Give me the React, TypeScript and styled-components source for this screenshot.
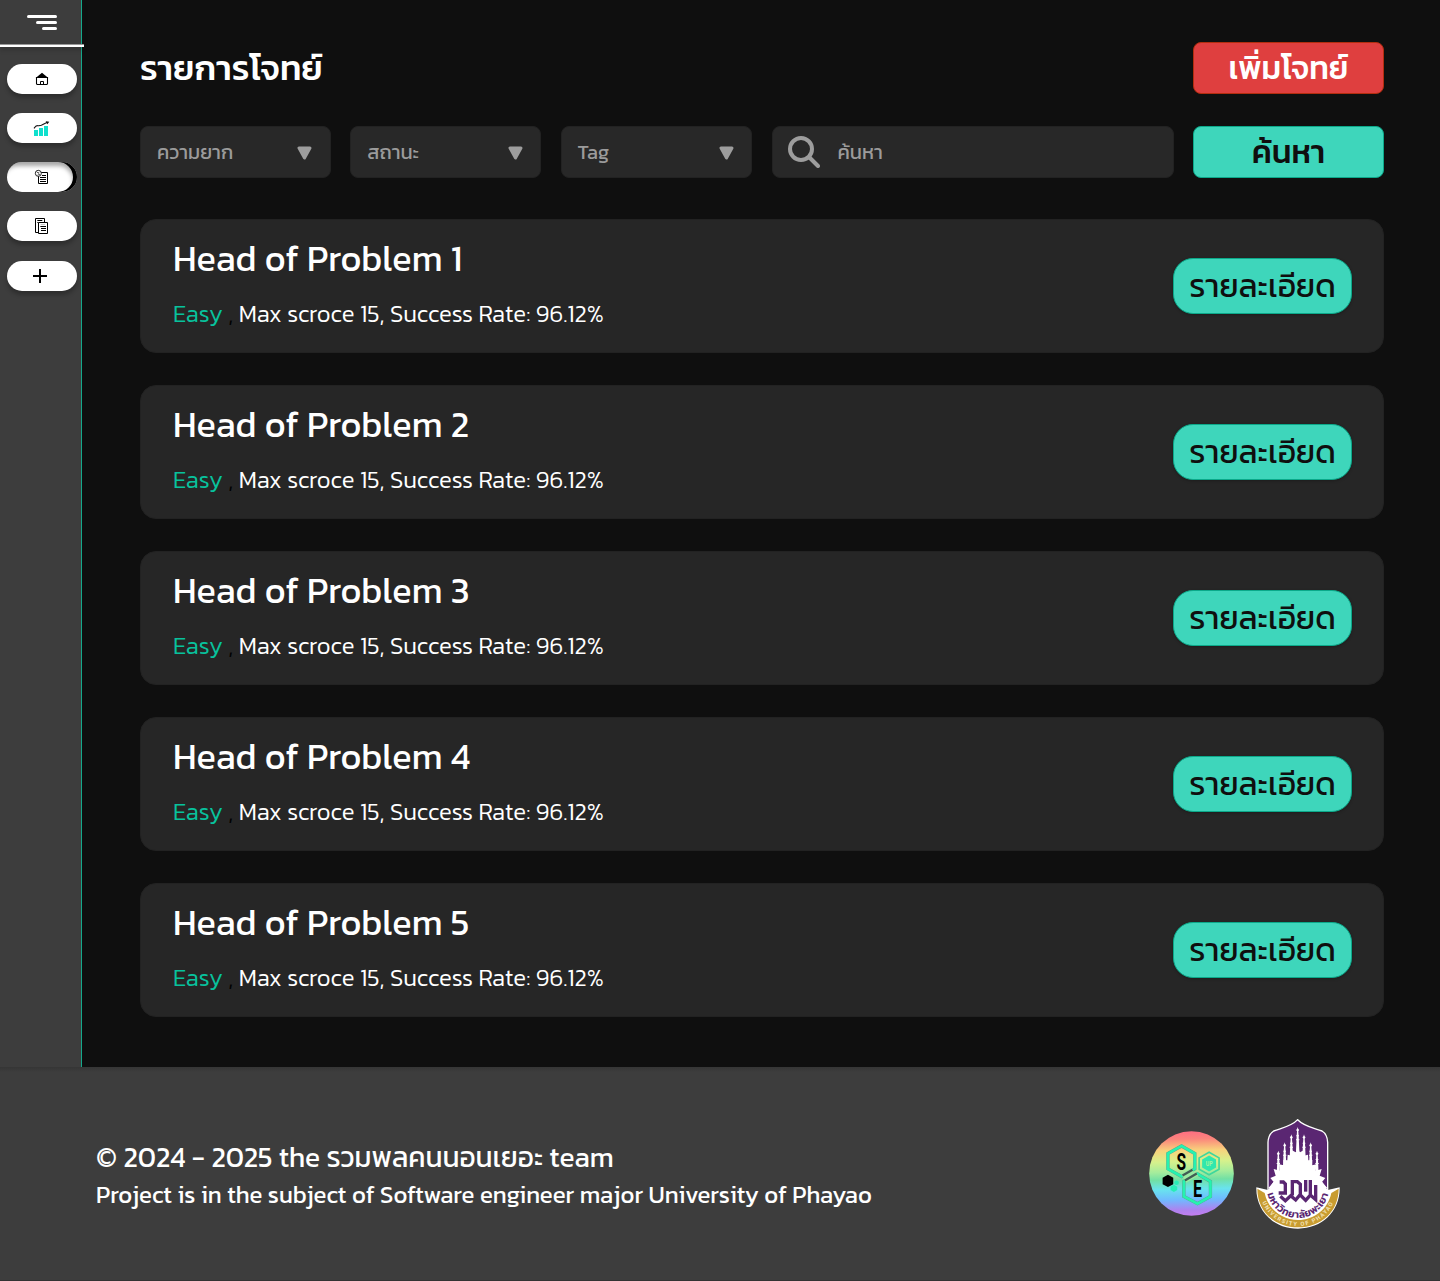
import React from "react";
import styled, { createGlobalStyle } from "styled-components";

const GlobalStyle = createGlobalStyle`
  *, *::before, *::after { box-sizing: border-box; }
  body {
    margin: 0;
    background: #0f0f0f;
    color: #fff;
    font-family: Kanit, "Noto Sans", "Noto Sans Thai", "Open Sans", sans-serif;
  }
  button, input { font: inherit; }
`;

const Page = styled.div`
  display: flex;
  flex-direction: column;
  width: 1440px;
  height: 1281px;
  overflow: hidden;
`;

const Body = styled.div`
  display: flex;
  height: 1067px;
`;

const Sidebar = styled.aside`
  flex: none;
  width: 82px;
  background: #3d3d3d;
  border-right: 1px solid #14a88b;
`;

const MenuBar = styled.div`
  display: flex;
  flex-direction: column;
  align-items: flex-end;
  gap: 3px;
  width: 84px;
  height: 47px;
  padding: 15px 27px 0 0;
  border-bottom: 2px solid #fff;
  box-shadow: 0 4px 4px rgba(0, 0, 0, 0.12), inset 0 -1px 0 #999;
`;

const MenuLine = styled.span<{ $width: number }>`
  width: ${(p) => p.$width}px;
  height: 3px;
  border-radius: 1.5px;
  background: #fff;
`;

const Nav = styled.nav`
  display: flex;
  flex-direction: column;
  gap: 19px;
  padding: 17px 0 0 7px;
`;

const NavPill = styled.button<{ $active?: boolean }>`
  display: block;
  width: 70px;
  height: 30px;
  padding: 0;
  border: 0;
  border-radius: 15px;
  background: #fff;
  box-shadow: ${(p) =>
    p.$active
      ? "inset -4px 0 0 #000, inset -4px 4px 4px rgba(0, 0, 0, 0.35)"
      : "0 4px 4px rgba(0, 0, 0, 0.25)"};

  &:last-child { margin-top: 1px; }

  svg { display: block; width: 70px; height: 30px; }
`;

const Main = styled.main`
  flex: 1;
  padding: 42px 56px 0 58px;
`;

const TitleRow = styled.header`
  display: flex;
  align-items: center;
  justify-content: space-between;
  height: 52px;
`;

const Title = styled.h1`
  margin: 0;
  font-size: 35px;
  font-weight: 500;
  line-height: 52px;
  white-space: nowrap;
`;

const ActionButton = styled.button<{ $tone: "danger" | "primary" }>`
  display: flex;
  align-items: center;
  justify-content: center;
  width: 191px;
  height: 52px;
  padding: 0;
  border: 1px solid ${(p) => (p.$tone === "danger" ? "#b32d0e" : "#0ba98a")};
  border-radius: 8px;
  background: ${(p) => (p.$tone === "danger" ? "#df3f3f" : "#3ed6bb")};
  color: ${(p) => (p.$tone === "danger" ? "#fff" : "#0f0f0f")};
  font-size: 32px;
  font-weight: 500;
  line-height: 50px;
  white-space: nowrap;
`;

const Filters = styled.div`
  display: grid;
  grid-template-columns: 190.8px 190.9px 191.6px 402px 191px;
  justify-content: space-between;
  margin-top: 32px;
`;

const Field = styled.div`
  display: flex;
  align-items: center;
  height: 52px;
  padding: 0 17.5px 0 16px;
  border: 1px solid #222;
  border-radius: 8px;
  background: #282828;
  color: #9b9b9b;
  font-size: 20px;
  white-space: nowrap;
`;

const Select = styled(Field)`
  justify-content: space-between;

  svg { margin-top: 2px; }
`;

const SearchField = styled(Field)`
  gap: 18px;
  padding-left: 15px;
`;

const List = styled.section`
  display: flex;
  flex-direction: column;
  gap: 32px;
  margin-top: 41px;
`;

const Card = styled.article`
  display: flex;
  align-items: center;
  justify-content: space-between;
  height: 134px;
  padding: 0 31px 0 32px;
  border: 1px solid #222;
  border-radius: 16px;
  background: #262626;
`;

const CardText = styled.div`
  height: 132px;
  padding-top: 11px;
`;

const CardTitle = styled.h2`
  margin: 0;
  font-size: 36px;
  font-weight: 400;
  line-height: 54px;
  white-space: nowrap;
`;

const CardMeta = styled.p`
  margin: 11px 0 0;
  font-size: 24px;
  font-weight: 300;
  line-height: 36px;
  white-space: nowrap;
`;

const Level = styled.span`
  color: #08c29d;
`;

const Comma = styled.span`
  color: #000;
`;

const DetailButton = styled.button`
  display: flex;
  align-items: center;
  justify-content: center;
  width: 179px;
  height: 56px;
  padding: 0;
  border: 1px solid #0ba98a;
  border-radius: 20px;
  background: #3ed6bb;
  box-shadow: 0 1px 3px rgba(0, 0, 0, 0.25);
  color: #0f0f0f;
  font-size: 32px;
  font-weight: 400;
  line-height: 54px;
  white-space: nowrap;
`;

const Footer = styled.footer`
  display: flex;
  align-items: flex-start;
  justify-content: space-between;
  height: 214px;
  padding: 51px 100px 0 96px;
  background: linear-gradient(#353535, #3d3d3d 5px);
  border-bottom: 1px solid #333;
`;

const Credits = styled.div`
  padding-top: 18px;
  white-space: nowrap;
`;

const Copyright = styled.p`
  margin: 0;
  font-size: 28px;
  line-height: 42px;
`;

const Subject = styled.p`
  margin: 0;
  font-size: 24px;
  line-height: 34px;
`;

const Logos = styled.div`
  display: flex;
  align-items: flex-start;
  gap: 22px;
`;

const TeamMark = styled.svg`
  display: block;
  width: 85px;
  height: 85px;
  margin-top: 13px;
`;

const UniversityMark = styled.svg`
  display: block;
  width: 84px;
  height: 110px;
  margin-top: 1px;
`;

const HomeIcon = () => (
  <svg viewBox="0 0 210 90">
    <path d="M86 42 L105 26 L124 42 Z" fill="#000" />
    <path d="M88.5 40.5V59.5L90.5 61.5H119.5L121.5 59.5V40.5Z" fill="none" stroke="#000" strokeWidth="3.2" />
    <path d="M100.5 61V52.5H109.5V61" fill="none" stroke="#000" strokeWidth="3" />
  </svg>
);

const ChartIcon = () => (
  <svg viewBox="0 0 210 90">
    <g fill="#0fe0cd">
      <rect x="81" y="51" width="12" height="18" />
      <rect x="96" y="45" width="12" height="24" />
      <rect x="111" y="39" width="12" height="30" />
    </g>
    <path d="M81 46 Q87 37 92 38 T103 37 L121 28" fill="none" stroke="#111" strokeWidth="3.2" />
    <path d="M116 25 L127 26 L121 34 Z" fill="#111" />
  </svg>
);

const TaskIcon = () => (
  <svg viewBox="0 0 210 90">
    <g fill="none" stroke="#000" strokeWidth="3">
      <path d="M94.5 42V64.5H121.5V31.5H102" />
      <circle cx="94" cy="34" r="9" fill="#fff" stroke="#222" />
      <path d="M89 29L94 34M92 39L99 37M95 30V35" stroke="#555" strokeWidth="2.8" />
      <path d="M105 40.5H117M99 46.5H117M99 52.5H117M99 58.5H117" />
    </g>
  </svg>
);

const DocsIcon = () => (
  <svg viewBox="0 0 210 90">
    <g fill="none" stroke="#000" strokeWidth="3">
      <path d="M93 64.5H85.5V22.5H112.5V34" />
      <path d="M94.5 34.5H121.5V67.5H94.5Z" />
      <path d="M91 28.5H106M91 34.5H94" />
      <path d="M100 46.5H117M102 52.5H117M102 58.5H117" />
      <path d="M101 40.5H114" stroke="#aaa" strokeWidth="2" />
    </g>
  </svg>
);

const PlusIcon = () => (
  <svg viewBox="0 0 210 90">
    <path d="M78 45H120M99 24V66" stroke="#000" strokeWidth="6" />
  </svg>
);

const Caret = () => (
  <svg width="15" height="14" viewBox="0 0 15 14">
    <path d="M2 2 H13 L7.5 12 Z" fill="#9d9d9d" stroke="#9d9d9d" strokeWidth="3" strokeLinejoin="round" />
  </svg>
);

const SearchIcon = () => (
  <svg width="32" height="32" viewBox="0 0 32 32" fill="none" stroke="#9d9d9d" strokeWidth="4">
    <circle cx="13" cy="13" r="11" />
    <path d="M21.5 21.5L30 30" strokeLinecap="round" />
  </svg>
);

const TeamLogo = () => (
  <TeamMark viewBox="27 62 256 256">
    <defs>
      <linearGradient id="rainbow" x1="0.4" y1="0" x2="0.6" y2="1" gradientTransform="rotate(10 .5 .5)">
        <stop offset="0" stopColor="#ff6b83" />
        <stop offset=".1" stopColor="#fb857c" />
        <stop offset=".23" stopColor="#f8d27c" />
        <stop offset=".36" stopColor="#d6f18c" />
        <stop offset=".48" stopColor="#a5ec9c" />
        <stop offset=".57" stopColor="#72e0a4" />
        <stop offset=".68" stopColor="#69e3ee" />
        <stop offset=".8" stopColor="#6fbaff" />
        <stop offset=".92" stopColor="#ae82ef" />
        <stop offset="1" stopColor="#c77df0" />
      </linearGradient>
    </defs>
    <circle cx="155" cy="190" r="127.5" fill="url(#rainbow)" />
    <g fill="none" strokeLinejoin="miter">
      <path d="M125 107L165 130V176L125 199L84 176V130Z" stroke="#5ba58c" strokeWidth="10" />
      <path d="M125 107L165 130V176L125 199L84 176V130Z" stroke="#25f2b0" strokeWidth="8" />
      <path d="M173 191L212 214V259L173 281L132 259V214Z" stroke="#5ba58c" strokeWidth="10" />
      <path d="M173 191L212 214V259L173 281L132 259V214Z" stroke="#25f2b0" strokeWidth="8" />
      <path d="M208 126L238 143V177L208 194L178 177V143Z" stroke="#3ed79d" strokeWidth="5" />
    </g>
    <path d="M208 136L229 148V172L208 184L187 172V148Z" fill="#30e7ad" />
    <path d="M128 198L159 180M135 211L171 190" stroke="#9aeaa1" strokeWidth="16" />
    <path d="M128 196L158 179M135 211L171 190" stroke="#405c54" strokeWidth="7" />
    <path d="M84 194L100 203V222L84 231L68 222V203Z" fill="#000" />
    <path d="M102 224L112 230V240L102 246L92 240V230Z" fill="#27edb7" />
    <circle cx="110" cy="218" r="7" fill="#27edb7" />
    <g fontFamily="Roboto, sans-serif" fontWeight="700" textAnchor="middle">
      <text transform="translate(124 178) scale(.65 1)" fontSize="72" fill="#000">S</text>
      <text transform="translate(173 261) scale(.68 1)" fontSize="72" fill="#000">E</text>
      <text transform="translate(208 167) scale(.8 1)" fontSize="20" fill="#a6f59c">UP</text>
    </g>
  </TeamMark>
);

const Spire = ({ x, y }: { x: number; y: number }) => (
  <g fill="#fff">
    <path d={`M${x} ${y}l1.5 5 3 4-2.5 4 1 14 2 45h-10l2-45 1-14-2.5-4 3-4z`} />
    <path d={`M${x - 4} ${y + 25}h8v3h-8zM${x - 5} ${y + 37}h10v3h-10z`} />
  </g>
);

const spires = [
  [473, 50],
  [454, 72],
  [492, 72],
  [434, 96],
  [512, 96],
  [415, 121],
  [531, 121],
];

const UniversityLogo = () => (
  <UniversityMark viewBox="348 26 252 330">
    <defs>
      <path id="thaiArc" d="M380 229A94 94 0 0 0 568 229" />
      <path id="latinArc" d="M358 231A116 116 0 0 0 590 231" />
    </defs>
    <path
      d="M473 28C455 48 428 52 401 62Q385 72 384 96V240H563V96Q562 72 546 62C519 52 492 48 473 28Z"
      fill="#5a2672"
      stroke="#fff"
      strokeWidth="4"
    />
    {spires.map(([x, y]) => (
      <Spire key={x} x={x} y={y} />
    ))}
    <path
      d="M473 112L480 126L491 120L492 136L504 133L505 150L517 149L516 165L530 162L527 181L545 176L539 196L556 203L546 215L562 233H385L401 215L391 203L407 196L401 176L420 181L417 162L431 165L430 149L442 150L443 133L455 136L456 120L467 126Z"
      fill="#fff"
    />
    <path d="M349 231L384 239L400 215H547L563 239L599 231C601 302 547 355 474 355S347 302 349 231Z" fill="#fff" />
    <path
      d="M352 235L374 248C384 297 426 329 474 329S564 297 574 248L596 235C596 304 543 351 474 351S352 304 352 235Z"
      fill="#c89c31"
    />
    <g fill="none" stroke="#5a2672" strokeWidth="10" strokeLinejoin="miter">
      <path d="M419 215H430L436 221V248H416" />
      <path d="M421 258L436 271L457 252V214H472L481 222V252L467 269L453 257" />
      <path d="M481 254L497 270L511 254V209" />
      <path d="M497 209V244" />
      <path d="M511 254L527 268V224" />
    </g>
    <g textAnchor="middle">
      <text
        fontFamily='Kanit, "Noto Sans", "Noto Sans Thai", sans-serif'
        fontWeight="600"
        fontSize="31"
        letterSpacing="1.2"
        fill="#5a2672"
      >
        <textPath href="#thaiArc" startOffset="50%">มหาวิทยาลัยพะเยา</textPath>
      </text>
      <text fontFamily="Roboto, sans-serif" fontWeight="700" fontSize="17" letterSpacing="4" fill="#f4e4b8">
        <textPath href="#latinArc" startOffset="50%">UNIVERSITY OF PHAYAO</textPath>
      </text>
    </g>
  </UniversityMark>
);

const problems = [1, 2, 3, 4, 5];

export default function App() {
  return (
    <Page>
      <GlobalStyle />
      <Body>
        <Sidebar>
          <MenuBar>
            <MenuLine $width={30} />
            <MenuLine $width={21} />
            <MenuLine $width={15} />
          </MenuBar>
          <Nav>
            <NavPill><HomeIcon /></NavPill>
            <NavPill><ChartIcon /></NavPill>
            <NavPill $active><TaskIcon /></NavPill>
            <NavPill><DocsIcon /></NavPill>
            <NavPill><PlusIcon /></NavPill>
          </Nav>
        </Sidebar>
        <Main>
          <TitleRow>
            <Title>รายการโจทย์</Title>
            <ActionButton $tone="danger">เพิ่มโจทย์</ActionButton>
          </TitleRow>
          <Filters>
            <Select>ความยาก<Caret /></Select>
            <Select>สถานะ<Caret /></Select>
            <Select>Tag<Caret /></Select>
            <SearchField><SearchIcon />ค้นหา</SearchField>
            <ActionButton $tone="primary">ค้นหา</ActionButton>
          </Filters>
          <List>
            {problems.map((n) => (
              <Card key={n}>
                <CardText>
                  <CardTitle>Head of Problem {n}</CardTitle>
                  <CardMeta>
                    <Level>Easy</Level> <Comma>,</Comma> Max scroce 15, Success Rate: 96.12%
                  </CardMeta>
                </CardText>
                <DetailButton>รายละเอียด</DetailButton>
              </Card>
            ))}
          </List>
        </Main>
      </Body>
      <Footer>
        <Credits>
          <Copyright>© 2024 - 2025 the รวมพลคนนอนเยอะ team</Copyright>
          <Subject>Project is in the subject of Software engineer major University of Phayao</Subject>
        </Credits>
        <Logos>
          <TeamLogo />
          <UniversityLogo />
        </Logos>
      </Footer>
    </Page>
  );
}
